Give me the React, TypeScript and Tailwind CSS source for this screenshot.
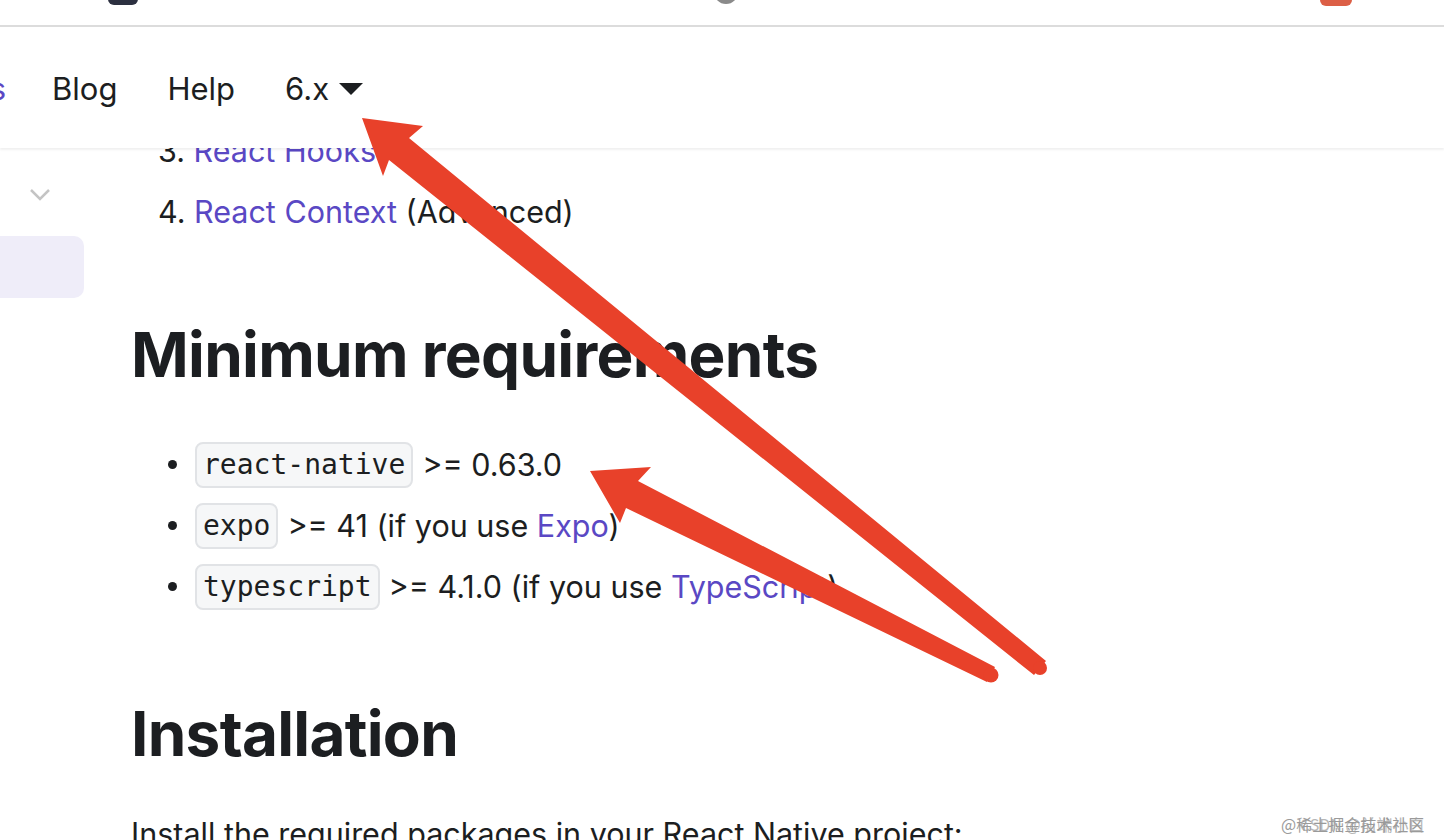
import React from "react";

const LINK = "text-[#5a48c4]";

function Code({ children }: { children: React.ReactNode }) {
  return (
    <span
      className="inline-block rounded-[8px] border-2 border-[#e1e3e6] bg-[#f6f7f8] px-[6px] text-[28px] leading-[42px] text-[#1c1e21]"
      style={{ fontFamily: '"DejaVu Sans Mono", "Liberation Mono", monospace' }}
    >
      {children}
    </span>
  );
}

function Bullet({ children }: { children: React.ReactNode }) {
  return (
    <li className="flex h-[61px] items-center">
      <span className="ml-[37px] mr-[18px] h-[9px] w-[9px] rounded-full bg-[#1c1e21]" />
      {children}
    </li>
  );
}

export default function App() {
  return (
    <div
      className="relative h-[840px] w-[1444px] overflow-hidden bg-white text-[#1c1e21]"
      style={{ fontFamily: 'Inter, "Noto Sans", "Liberation Sans", sans-serif' }}
    >
      {/* browser chrome remnant */}
      <div className="flex h-[27px] items-start border-b-2 border-[#dcdcdc] bg-white">
        <div className="ml-[108px] -mt-[20px] h-[25px] w-[30px] rounded-[6px] bg-[#2c3040]" />
        <div className="ml-[576px] -mt-[20px] h-[24px] w-[24px] rounded-full bg-[#8a8a8a]" />
        <div className="ml-[582px] -mt-[20px] h-[26px] w-[32px] rounded-[6px] bg-[#dc5f46]" />
      </div>

      {/* navbar */}
      <div className="relative z-10 flex h-[121px] items-center bg-white pt-[4px] shadow-[0_2px_2px_rgba(0,0,0,0.06)]">
        <div className="-ml-[69px] flex items-center gap-[50px] text-[31px]">
          <span className={`${LINK} -mr-[4px]`}>Docs</span>
          <span>Blog</span>
          <span>Help</span>
          <span className="flex items-center gap-[10px]">
            6.x
            <svg width="24" height="13" viewBox="0 0 24 13">
              <polygon points="0,0 24,0 12,12" fill="#1c1e21" />
            </svg>
          </span>
        </div>
      </div>

      {/* body */}
      <div className="flex h-[692px] overflow-hidden">
        {/* sidebar */}
        <div className="w-[84px] shrink-0">
          <div className="mt-[40px] flex justify-end pr-[33px]">
            <svg width="22" height="14" viewBox="0 0 22 14">
              <polyline points="2,2 11,11 20,2" fill="none" stroke="#c4c4c4" strokeWidth="2.5" />
            </svg>
          </div>
          <div className="mt-[34px] h-[62px] w-[84px] rounded-r-[10px] bg-[#efedf9]" />
        </div>

        {/* main */}
        <div className="ml-[47px] -mt-[28px] w-[1000px]">
          <ol className="ml-[27px] text-[30.5px]">
            <li className="h-[61px] leading-[61px]">
              3. <span className={LINK}>React Hooks</span>
            </li>
            <li className="h-[61px] leading-[61px]">
              4. <span className={LINK}>React Context</span> (Advanced)
            </li>
          </ol>

          <h2 className="mt-[76px] text-[62px] font-bold leading-[74px] tracking-[-0.7px]">
            Minimum requirements
          </h2>

          <ul className="mt-[42px] text-[30.5px]">
            <Bullet>
              <Code>react-native</Code>
              <span className="ml-[9px]">&gt;= 0.63.0</span>
            </Bullet>
            <Bullet>
              <Code>expo</Code>
              <span className="ml-[9px]">
                &gt;= 41 (if you use <span className={LINK}>Expo</span>)
              </span>
            </Bullet>
            <Bullet>
              <Code>typescript</Code>
              <span className="ml-[9px]">
                &gt;= 4.1.0 (if you use <span className={LINK}>TypeScript</span>)
              </span>
            </Bullet>
          </ul>

          <h2 className="mt-[80px] text-[62px] font-bold leading-[74px] tracking-[-0.7px]">
            Installation
          </h2>

          <p className="mt-[37px] text-[30.5px] leading-[51px]">
            Install the required packages in your React Native project:
          </p>
        </div>
      </div>

      {/* watermark */}
      <div
        className="absolute left-[1281px] top-[812px] text-[16px] text-[#9a9a9a]"
        style={{ fontFamily: '"Noto Sans CJK SC", sans-serif' }}
      >
        @稀土掘金技术社区
      </div>
      <div
        className="absolute left-[1300px] top-[812px] text-[16px] text-[#9a9a9a] opacity-70"
        style={{ fontFamily: '"Noto Sans CJK SC", sans-serif' }}
      >
        CSDN @前端小白
      </div>

      {/* annotation arrows */}
      <svg
        className="pointer-events-none absolute left-0 top-0 z-20"
        width="1444"
        height="840"
        viewBox="0 0 1444 840"
      >
        <g fill="#e8412a">
          <polygon points="362,118 423,126 409,138 1046,661 1034,675 389,160 383,176" />
          <circle cx="1040" cy="668" r="7" />
          <polygon points="590,471 651,467 638,481 995,667 987,682 626,508 620,523" />
          <circle cx="991" cy="675" r="7.5" />
        </g>
      </svg>
    </div>
  );
}
